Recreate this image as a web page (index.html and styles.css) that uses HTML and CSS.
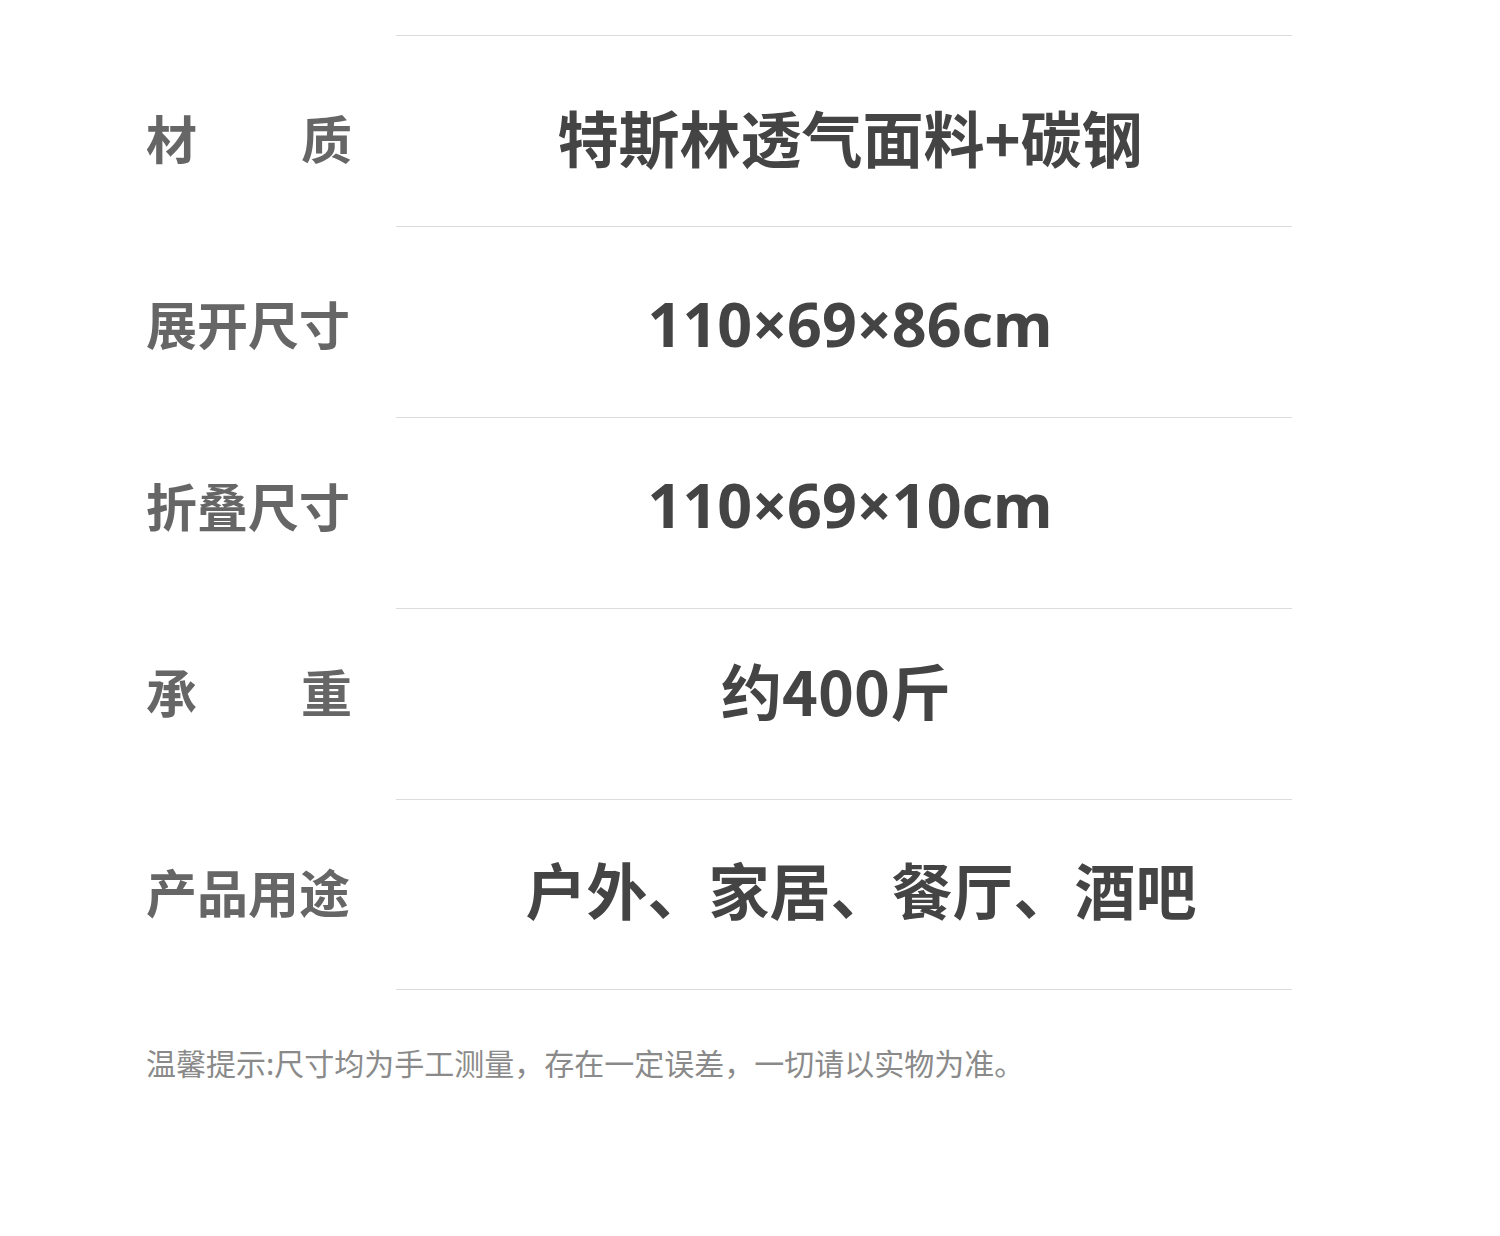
FILE: index.html
```html
<!DOCTYPE html>
<html lang="zh">
<head>
<meta charset="utf-8">
<link rel="stylesheet" href="styles.css">
</head>
<body>
<div class="page">
  <div class="table">
    <div class="row r1">
      <div class="label justify"><span>材</span><span>质</span></div>
      <div class="value">特斯林透气面料+碳钢</div>
    </div>
    <div class="row r2">
      <div class="label">展开尺寸</div>
      <div class="value num">110×69×86cm</div>
    </div>
    <div class="row r3">
      <div class="label">折叠尺寸</div>
      <div class="value num">110×69×10cm</div>
    </div>
    <div class="row r4">
      <div class="label justify"><span>承</span><span>重</span></div>
      <div class="value">约400斤</div>
    </div>
    <div class="row r5">
      <div class="label">产品用途</div>
      <div class="value">户外、家居、餐厅、酒吧</div>
    </div>
  </div>
  <p class="note">温馨提示:尺寸均为手工测量，存在一定误差，一切请以实物为准。</p>
</div>
</body>
</html>
```
FILE: styles.css
```css
html, body {
  margin: 0;
  padding: 0;
  background: #ffffff;
}
body {
  font-family: "Noto Sans CJK SC", "Noto Sans", sans-serif;
  width: 1500px;
  height: 1236px;
  overflow: hidden;
}
.page {
  padding: 35px 0 0 146px;
}
.table {
  display: flex;
  flex-direction: column;
}
.row {
  --pt: 0px;
  --pb: 0px;
  --lpt: 0px;
  --lpb: 0px;
  --pl: 12px;
  --pr: 0px;
  display: flex;
  height: 191px;
}
.r1 { --pt: 10px; --lpt: 12px; }
.r2 { --pt: 2px; --lpt: 2px; }
.r3 { --pb: 18px; --lpb: 16px; }
.r4 { --pb: 30px; --lpb: 26px; --pl: 0px; --pr: 16px; }
.r5 { --pb: 12px; --lpb: 8px; --pl: 34px; }
.label {
  width: 206px;
  margin-right: 44px;
  box-sizing: border-box;
  padding-top: var(--lpt);
  padding-bottom: var(--lpb);
  font-size: 51px;
  font-weight: 700;
  color: #666666;
  display: flex;
  align-items: center;
  white-space: nowrap;
}
.label.justify {
  justify-content: space-between;
}
.value {
  width: 896px;
  border-top: 1px solid #dcdcdc;
  display: flex;
  align-items: center;
  justify-content: center;
  padding-top: var(--pt);
  padding-bottom: var(--pb);
  padding-left: var(--pl);
  padding-right: var(--pr);
  box-sizing: border-box;
  font-size: 61px;
  font-weight: 700;
  color: #444444;
  white-space: nowrap;
}
.row:last-child .value {
  border-bottom: 1px solid #dcdcdc;
}
.value.num {
  font-family: "Noto Sans", "Noto Sans CJK SC", sans-serif;
  font-size: 61px;
}
.note {
  margin: 52px 0 0 0;
  font-size: 30px;
  color: #8a8a8a;
  line-height: 40px;
}
```
